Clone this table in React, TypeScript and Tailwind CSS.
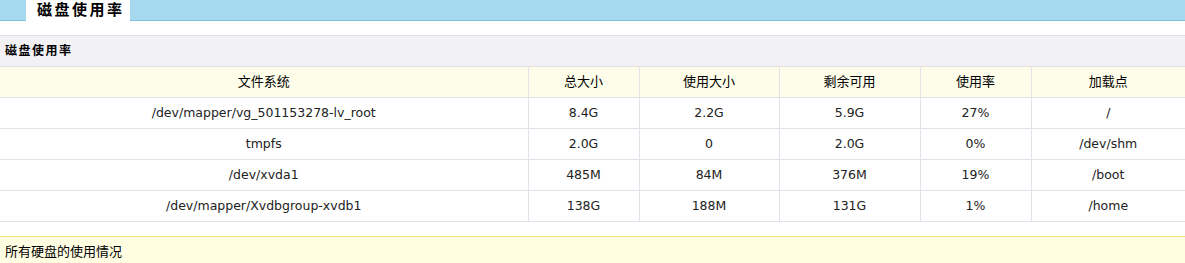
const rows = [
  { fs: "/dev/mapper/vg_501153278-lv_root", size: "8.4G", used: "2.2G", avail: "5.9G", pct: "27%", mount: "/" },
  { fs: "tmpfs", size: "2.0G", used: "0", avail: "2.0G", pct: "0%", mount: "/dev/shm" },
  { fs: "/dev/xvda1", size: "485M", used: "84M", avail: "376M", pct: "19%", mount: "/boot" },
  { fs: "/dev/mapper/Xvdbgroup-xvdb1", size: "138G", used: "188M", avail: "131G", pct: "1%", mount: "/home" },
];

const headers = ["文件系统", "总大小", "使用大小", "剩余可用", "使用率", "加载点"];
const widths = ["w-[528px]", "w-[111px]", "w-[140px]", "w-[141px]", "w-[111px]", ""];

export default function App() {
  return (
    <div className="w-[1185px] h-[263px] overflow-hidden bg-white text-[#222] font-['DejaVu_Sans','Noto_Sans_CJK_SC',sans-serif]">
      {/* 顶部标签栏 */}
      <div className="h-[21px] bg-[#a6d9ef] border-b border-[#7fc1e4] flex items-end pl-[26px]">
        <div className="h-[21px] -mb-px bg-white pl-[11px] w-[104px] flex items-center whitespace-nowrap text-[15px] font-bold tracking-[2.5px] text-black leading-none">
          磁盘使用率
        </div>
      </div>

      <div className="h-[14px]" />

      {/* 标题 */}
      <div className="h-[31px] bg-[#f2f2f4] border-t border-[#dfdfe6] flex items-center pl-[5px] text-[12px] font-bold tracking-[1.5px] text-black">
        磁盘使用率
      </div>

      <table className="w-full border-collapse table-fixed text-[12.5px]">
        <colgroup>
          {widths.map((w, i) => (
            <col key={i} className={w} />
          ))}
        </colgroup>
        <thead>
          <tr className="bg-[#fefde9] h-[31px]">
            {headers.map((h, i) => (
              <th
                key={h}
                className={`font-normal text-[13px] text-black border-y border-[#e2e2ea] ${i > 0 ? "border-l" : ""}`}
              >
                {h}
              </th>
            ))}
          </tr>
        </thead>
        <tbody>
          {rows.map((r) => (
            <tr key={r.fs} className="h-[31px]">
              {[r.fs, r.size, r.used, r.avail, r.pct, r.mount].map((v, i) => (
                <td
                  key={i}
                  className={`text-center border-b border-[#e2e2ea] ${i > 0 ? "border-l" : ""}`}
                >
                  {v}
                </td>
              ))}
            </tr>
          ))}
        </tbody>
      </table>

      <div className="h-[14px]" />

      {/* 说明 */}
      <div className="h-[30px] bg-[#fffee3] border-t border-[#fbe07a] flex items-center pl-[5px] text-[13px] text-black">
        所有硬盘的使用情况
      </div>
    </div>
  );
}
